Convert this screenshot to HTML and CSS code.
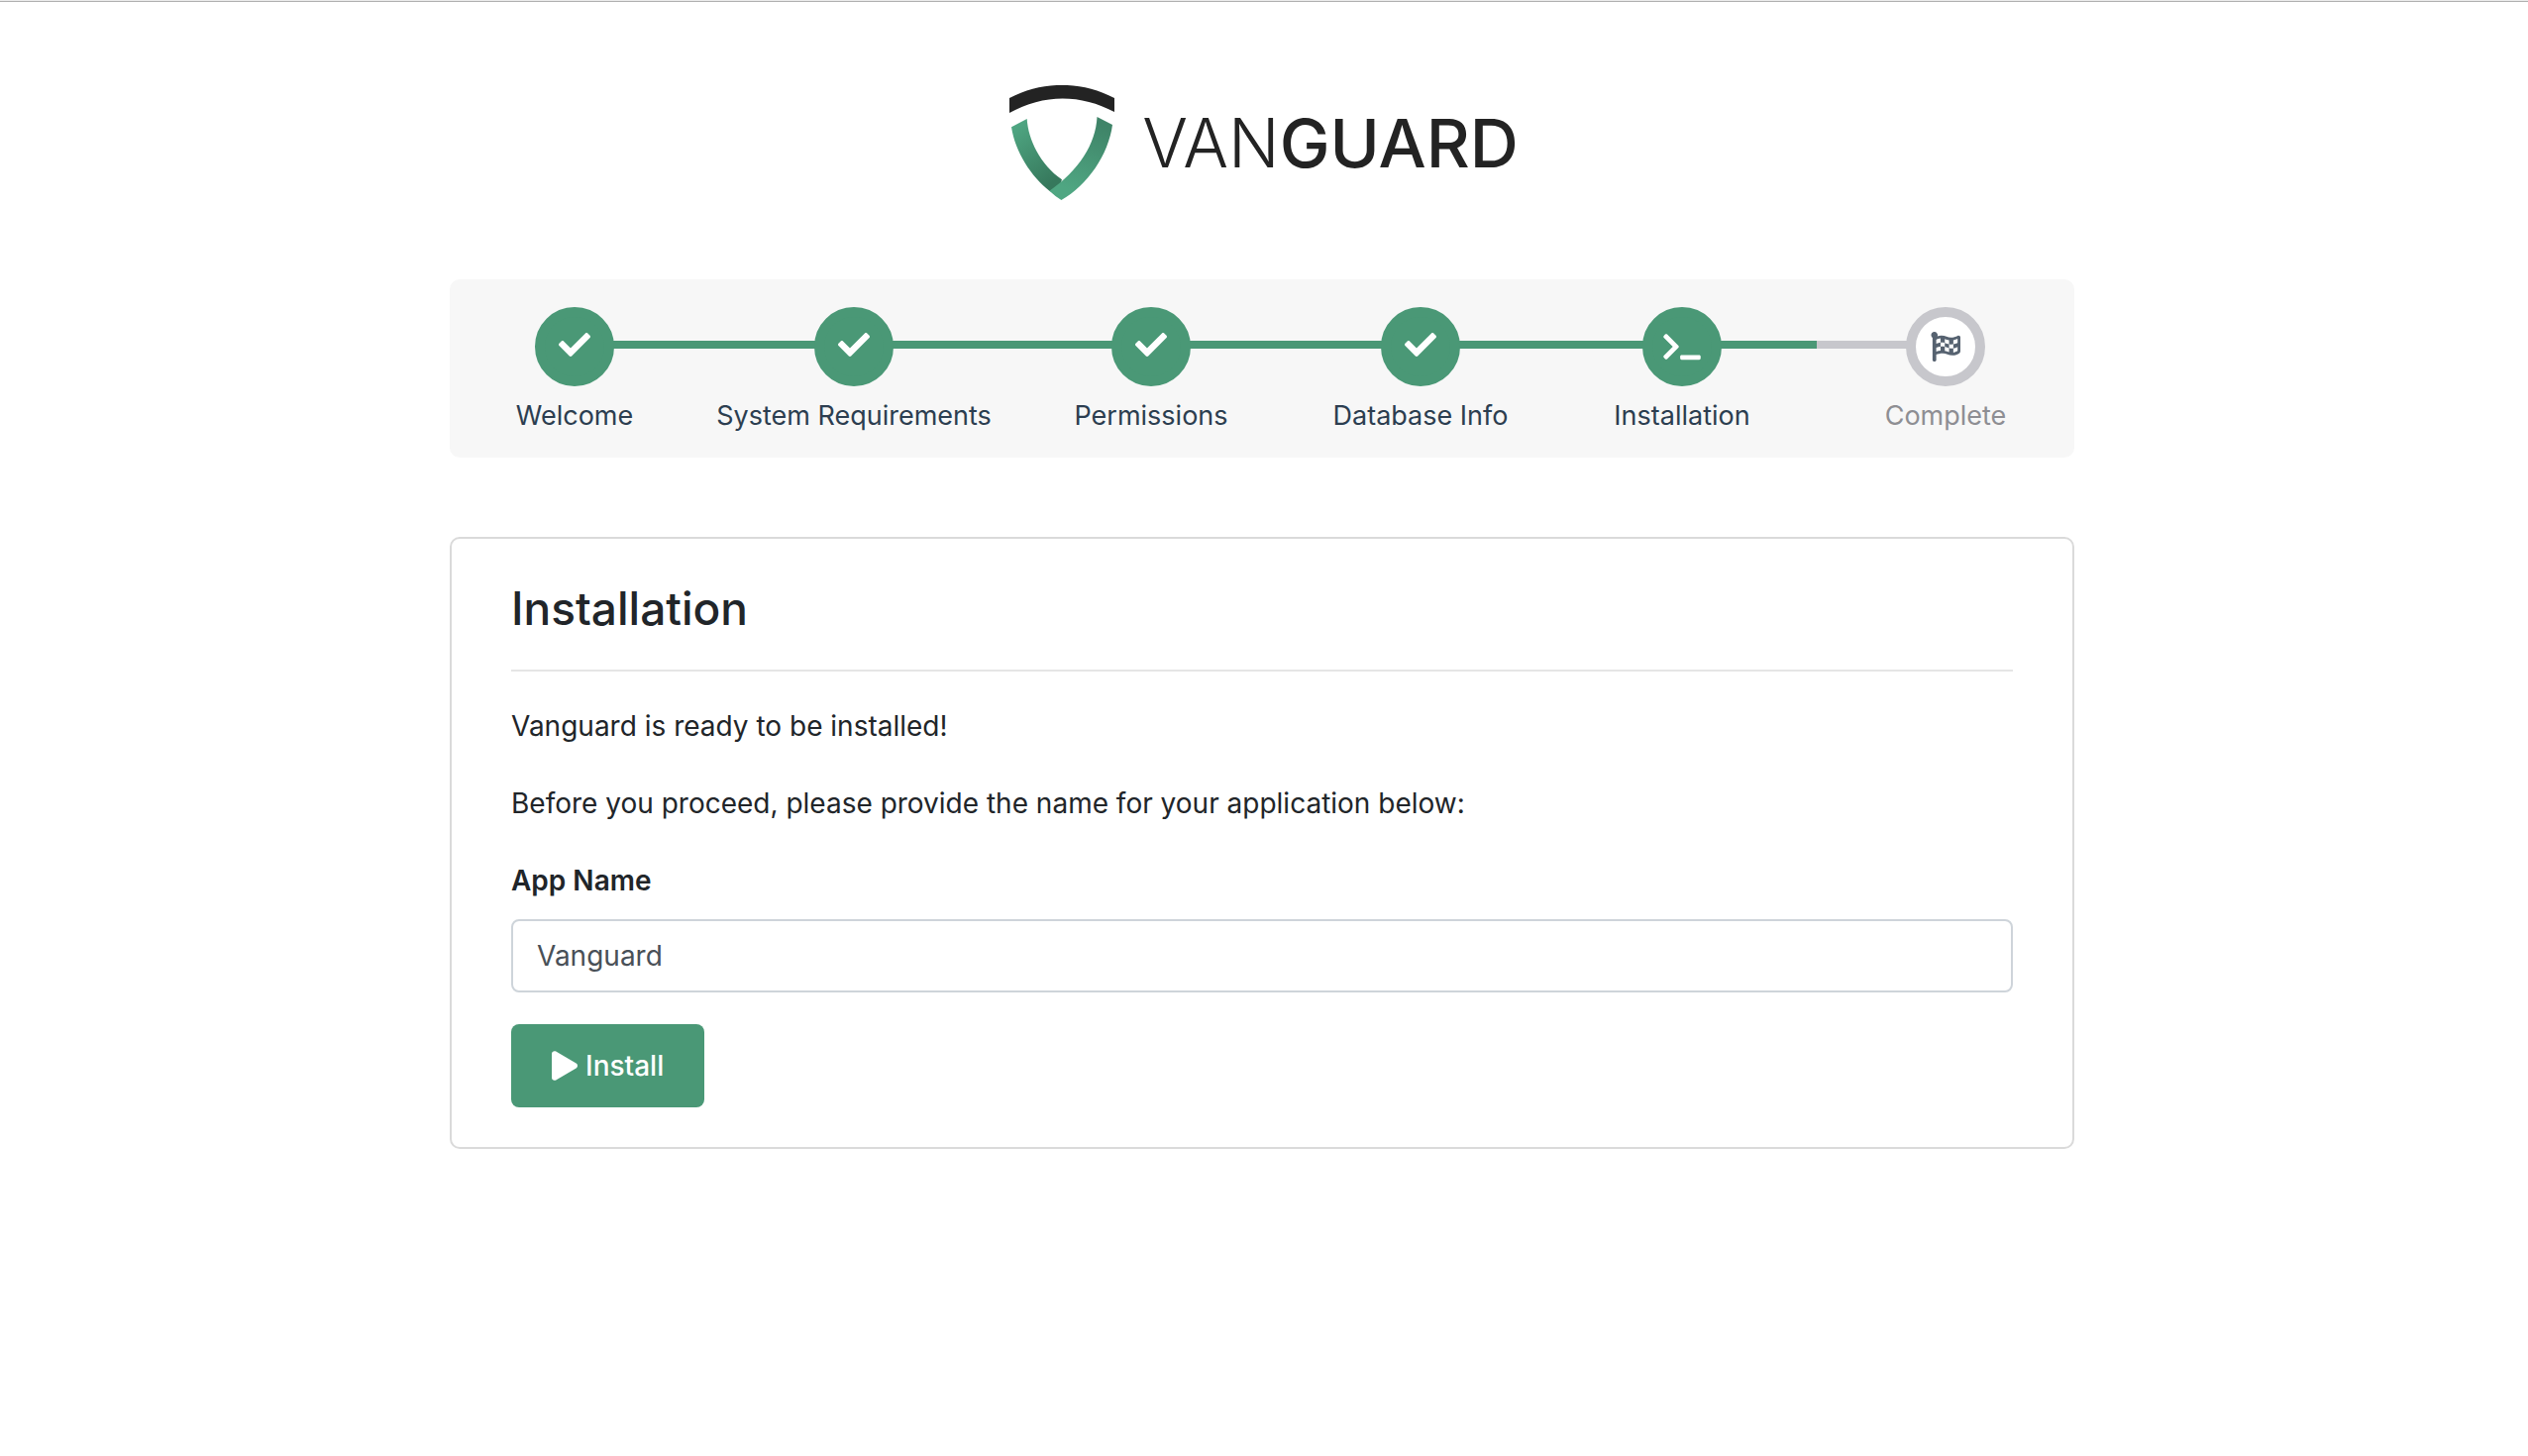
FILE: index.html
```html
<!DOCTYPE html>
<html lang="en">
<head>
  <meta charset="utf-8">
  <meta name="viewport" content="width=device-width, initial-scale=1">
  <title>Vanguard - Installation</title>
  <link rel="stylesheet" href="styles.css">
</head>
<body>
  <header class="logo">
    <svg class="logo-mark" viewBox="0 0 106 116" aria-hidden="true">
      <defs>
        <linearGradient id="arm-left" x1="0" y1="0" x2="0.5" y2="1">
          <stop offset="0.1" stop-color="#4fa682"/>
          <stop offset="1" stop-color="#36785c"/>
        </linearGradient>
        <linearGradient id="arm-right" x1="0.5" y1="0" x2="0.2" y2="1">
          <stop offset="0" stop-color="#3f8468"/>
          <stop offset="0.85" stop-color="#4fa682"/>
        </linearGradient>
      </defs>
      <path fill="#232323" d="M0 13C34-4.500 72-4.500 106 13V27C72 8.700 34 8.700 0 28Z"/>
      <path fill="url(#arm-left)" d="M2 42.300L17.700 34C19 55 31 80 53 95.300L48 110L40.400 106.700C22 92 6 68 2 42.300Z"/>
      <path fill="url(#arm-right)" d="M88.500 32L104 40C100 70 79 101 52.400 116Q46 112 40.400 106.700C70 86 87 60 88.500 32Z"/>
    </svg>
    <span class="logo-text"><span class="logo-light">VAN</span><span class="logo-bold">GUARD</span></span>
  </header>

  <main class="page">
    <div class="container">
      <ol class="steps">
        <li class="step done">
          <span class="dot dot-check"><svg class="icon-check" viewBox="0 0 512 512" aria-hidden="true"><use href="#check"/></svg></span>
          <span class="step-label">Welcome</span>
        </li>
        <li class="step done">
          <span class="dot dot-check"><svg class="icon-check" viewBox="0 0 512 512" aria-hidden="true"><use href="#check"/></svg></span>
          <span class="step-label">System Requirements</span>
        </li>
        <li class="step done">
          <span class="dot dot-check"><svg class="icon-check" viewBox="0 0 512 512" aria-hidden="true"><use href="#check"/></svg></span>
          <span class="step-label">Permissions</span>
        </li>
        <li class="step done">
          <span class="dot dot-check"><svg class="icon-check" viewBox="0 0 512 512" aria-hidden="true"><use href="#check"/></svg></span>
          <span class="step-label">Database Info</span>
        </li>
        <li class="step done" aria-current="step">
          <span class="dot"><svg class="icon-terminal" viewBox="0 0 640 512" aria-hidden="true"><path d="M257.981 272.971L63.638 467.314c-9.373 9.373-24.569 9.373-33.941 0L7.029 444.647c-9.357-9.357-9.375-24.522-.04-33.901L161.011 256 6.990 101.255c-9.335-9.379-9.317-24.544.04-33.901l22.667-22.667c9.373-9.373 24.569-9.373 33.941 0L257.981 239.030c9.373 9.372 9.373 24.568 0 33.941zM640 456v-32c0-13.255-10.745-24-24-24H312c-13.255 0-24 10.745-24 24v32c0 13.255 10.745 24 24 24h304c13.255 0 24-10.745 24-24z"/></svg></span>
          <span class="step-label">Installation</span>
        </li>
        <li class="step">
          <span class="dot"><svg class="icon-flag" viewBox="0 0 512 512" aria-hidden="true"><path d="M243.200 189.900V258c26.100 5.900 49.300 15.600 73.600 22.300v-68.200c-26-5.800-49.400-15.500-73.600-22.200zm223.300-123c-34.300 15.900-76.500 31.900-117 31.900C296 98.800 251.700 64 184.300 64c-25 0-47.300 4.400-68 12 2.800-7.300 4.100-15.200 3.600-23.600C118.100 24 94.800 1.200 66.300 0 34.300-1.300 8 24.300 8 56c0 19 9.500 35.800 24 45.900V488c0 13.300 10.700 24 24 24h16c13.300 0 24-10.700 24-24v-94.400c28.300-12.100 63.600-22.100 114.400-22.100 53.600 0 97.800 34.800 165.200 34.800 48.200 0 86.700-16.300 122.500-40.900 8.700-6 13.800-15.800 13.800-26.400V95.900c.1-23.300-24.200-38.800-45.400-29zM169.600 325.500c-25.800 2.700-50 8.200-73.600 16.600v-70.500c26.200-9.300 47.500-15 73.600-17.400v71.300zM464 191c-23.600 9.800-46.300 19.500-73.600 23.900V286c24.800-3.400 51.400-11.800 73.600-26v70.500c-25.100 16.100-48.500 24.700-73.600 27.100V286c-27 3.700-47.900 1.500-73.600-5.600v67.400c-23.900-7.400-47.300-16.700-73.600-21.300V258c-19.700-4.400-40.800-6.800-73.600-3.800v-70c-22.400 3.100-44.600 10.200-73.600 20.900v-70.500c33.200-12.200 50.100-19.800 73.600-22v71.600c27-3.700 48.400-1.300 73.600 5.700v-67.400c23.700 7.400 47.200 16.700 73.600 21.300v68.400c23.700 5.300 47.600 6.900 73.600 2.700V143c27-4.800 52.300-13.600 73.600-22.500z"/></svg></span>
          <span class="step-label">Complete</span>
        </li>
      </ol>

      <form class="card">
        <h1 class="card-title">Installation</h1>
        <hr class="divider">
        <p class="text">Vanguard is ready to be installed!</p>
        <p class="text">Before you proceed, please provide the name for your application below:</p>
        <label class="field-label" for="app-name">App Name</label>
        <input class="field" id="app-name" name="app_name" type="text" value="Vanguard">
        <button class="button" type="submit">
          <svg class="icon-play" viewBox="0 0 448 512" aria-hidden="true"><path d="M424.400 214.700L72.400 6.600C43.800-10.300 0 6.100 0 47.900V464c0 37.500 40.700 60.100 72.400 41.300l352-208c31.400-18.500 31.500-64.100 0-82.600z"/></svg>
          Install
        </button>
      </form>
    </div>
  </main>

  <svg class="sprite" aria-hidden="true">
    <symbol id="check" viewBox="0 0 512 512">
      <path d="M173.898 439.404l-166.400-166.400c-9.997-9.997-9.997-26.206 0-36.204l36.203-36.204c9.997-9.998 26.207-9.998 36.204 0L192 312.690 432.095 72.596c9.997-9.997 26.207-9.997 36.204 0l36.203 36.204c9.997 9.997 9.997 26.206 0 36.204l-294.400 294.401c-9.998 9.997-26.207 9.997-36.204-.001z"/>
    </symbol>
  </svg>
</body>
</html>
```

FILE: styles.css
```css
:root {
  --green: #4a9876;
  --gray: #c7c7cc;
  --ink: #212529;
}

*,
*::before,
*::after {
  box-sizing: border-box;
}

body {
  margin: 0;
  border-top: 1px solid #ebebeb;
  box-shadow: inset 0 1px 0 #b0b0b0;
  background: #fff;
  color: var(--ink);
  font-family: Inter, "Liberation Sans", sans-serif;
  font-size: 28px;
  line-height: 46px;
}

svg {
  display: block;
  fill: currentColor;
}

.sprite {
  display: none;
}

/* Logo */
.logo {
  display: flex;
  justify-content: center;
  align-items: center;
  gap: 28px;
  padding-top: 85px;
}

.logo-mark {
  width: 106px;
  height: 116px;
}

.logo-text {
  color: #232323;
  font-size: 68px;
  line-height: 80px;
}

.logo-light {
  font-weight: 300;
}

.logo-bold {
  font-weight: 500;
}

.page {
  padding: 80px 4px 80px 0;
}

.container {
  max-width: 1640px;
  margin: 0 auto;
}

/* Progress steps */
.steps {
  display: grid;
  grid-template-columns: 252fr 312fr 288fr 256fr 272fr 260fr;
  margin: 0 0 80px;
  padding: 28px 0 20px;
  border-radius: 10px;
  background: #f7f7f7;
  list-style: none;
}

.step {
  position: relative;
  display: flex;
  flex-direction: column;
  align-items: center;
  gap: 8px;
  color: #8e8e93;
}

.step.done {
  color: #2c3e50;
}

.step::before {
  content: "";
  position: absolute;
  top: 34px;
  left: 0;
  width: 100%;
  height: 8px;
  background: var(--gray);
}

.step.done::before {
  background: var(--green);
}

.step:first-child::before {
  left: 50%;
  width: 50%;
}

.step:last-child::before {
  width: 50%;
}

.step-label {
  font-size: 27px;
  line-height: 44px;
}

.dot {
  position: relative;
  display: flex;
  justify-content: center;
  align-items: center;
  width: 80px;
  height: 80px;
  border: 10px solid var(--gray);
  border-radius: 50%;
  background: #fff;
  color: #566270;
}

.done .dot {
  border-color: var(--green);
  background: var(--green);
  color: #fff;
}

.dot-check {
  padding-bottom: 4px;
}

.icon-check {
  width: 32px;
  height: 32px;
}

.icon-terminal {
  width: 38px;
  height: 30px;
}

.icon-flag {
  width: 30px;
  height: 30px;
}

/* Card */
.card {
  display: flex;
  flex-direction: column;
  align-items: stretch;
  padding: 40px 60px;
  border: 2px solid #dadada;
  border-radius: 10px;
}

.card-title {
  margin: 0 0 32px;
  font-size: 46px;
  font-weight: 500;
  line-height: 60px;
}

.divider {
  width: 100%;
  height: 2px;
  margin: 0 0 32px;
  border: 0;
  background: #e5e5e5;
}

.text {
  margin: 0 0 32px;
}

.field-label {
  margin-bottom: 16px;
  font-weight: 600;
}

.field {
  width: 100%;
  height: 74px;
  margin-bottom: 32px;
  padding: 0 24px;
  border: 2px solid #ced4da;
  border-radius: 8px;
  background: #fff;
  color: #495057;
  font: inherit;
}

.button {
  display: flex;
  align-self: flex-start;
  align-items: center;
  gap: 8px;
  height: 84px;
  padding: 0 41px;
  border: 0;
  border-radius: 8px;
  background: var(--green);
  color: #fff;
  font: inherit;
  font-weight: 500;
  cursor: pointer;
}

.icon-play {
  width: 26px;
  height: 30px;
}
```
